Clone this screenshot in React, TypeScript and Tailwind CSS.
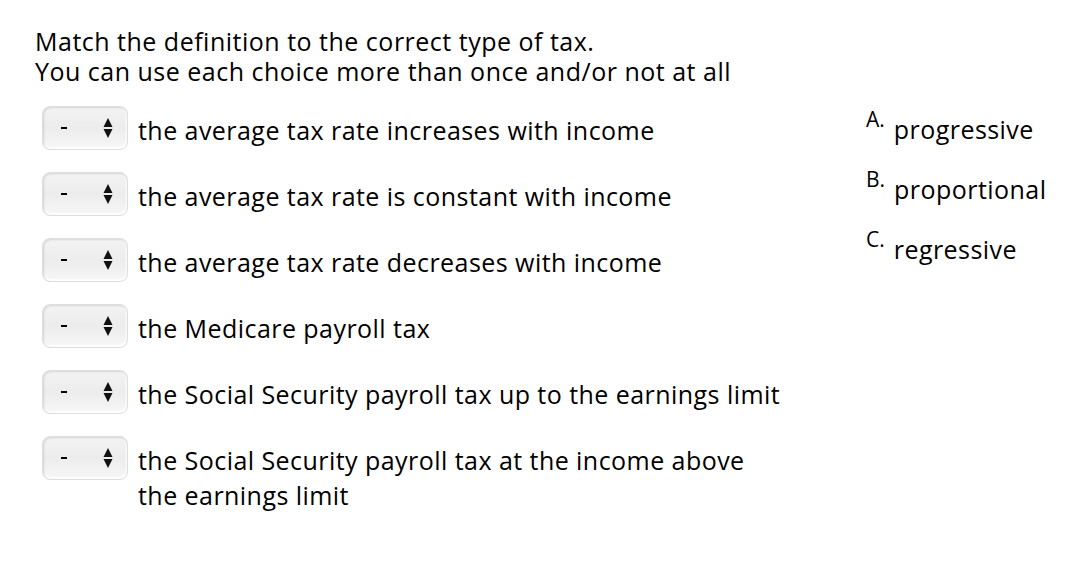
import React from 'react';

const items: string[][] = [
  ['the average tax rate increases with income'],
  ['the average tax rate is constant with income'],
  ['the average tax rate decreases with income'],
  ['the Medicare payroll tax'],
  ['the Social Security payroll tax up to the earnings limit'],
  ['the Social Security payroll tax at the income above', 'the earnings limit'],
];

const choices = [
  { key: 'A.', label: 'progressive' },
  { key: 'B.', label: 'proportional' },
  { key: 'C.', label: 'regressive' },
];

// Fake native select in the old mac style: dash placeholder + up/down arrows
const ChoiceSelect: React.FC = () => (
  <div className="w-[86px] h-[44px] shrink-0 rounded-[8px] border border-[#dedede] bg-gradient-to-b from-[#f3f3f3] via-[#ececec] to-[#f7f7f7] shadow-[inset_1px_1px_2px_rgba(0,0,0,0.12),inset_-1px_-2px_2px_rgba(255,255,255,0.9)] flex items-center pl-[18px] pr-[14px] justify-between">
    <span className="w-[6px] h-[2px] bg-black" />
    <svg width="10" height="20" viewBox="0 0 10 20">
      <path d="M5 0 L9.5 9 L0.5 9 Z" fill="#111" />
      <path d="M0.5 11 L9.5 11 L5 20 Z" fill="#111" />
    </svg>
  </div>
);

export default function App() {
  return (
    <div className="w-[1078px] h-[566px] bg-white text-black font-['Open_Sans',sans-serif]">
      <div className="pl-[35px] pt-[26px] text-[25px] leading-[30px] tracking-[0.5px]">
        <p>Match the definition to the correct type of tax.</p>
        <p>You can use each choice more than once and/or not at all</p>
      </div>

      <div className="flex pl-[42px] pt-[20px]">
        <div className="flex flex-col gap-[22px] w-[824px]">
          {items.map((lines) => (
            <div key={lines[0]} className="flex items-start gap-[10px]">
              <ChoiceSelect />
              <p className="text-[25px] leading-[35px] tracking-[0.45px] pt-[7px] whitespace-nowrap">
                {lines.map((l, i) => (
                  <React.Fragment key={l}>
                    {i > 0 && <br />}
                    {l}
                  </React.Fragment>
                ))}
              </p>
            </div>
          ))}
        </div>

        <div className="flex flex-col gap-[22px] pt-[3px]">
          {choices.map((c) => (
            <div key={c.key} className="flex items-start">
              <span className="text-[21px] leading-[21px] mr-[9px]">{c.key}</span>
              <span className="text-[25px] leading-[35px] tracking-[0.45px] pt-[3px]">{c.label}</span>
            </div>
          ))}
        </div>
      </div>
    </div>
  );
}
